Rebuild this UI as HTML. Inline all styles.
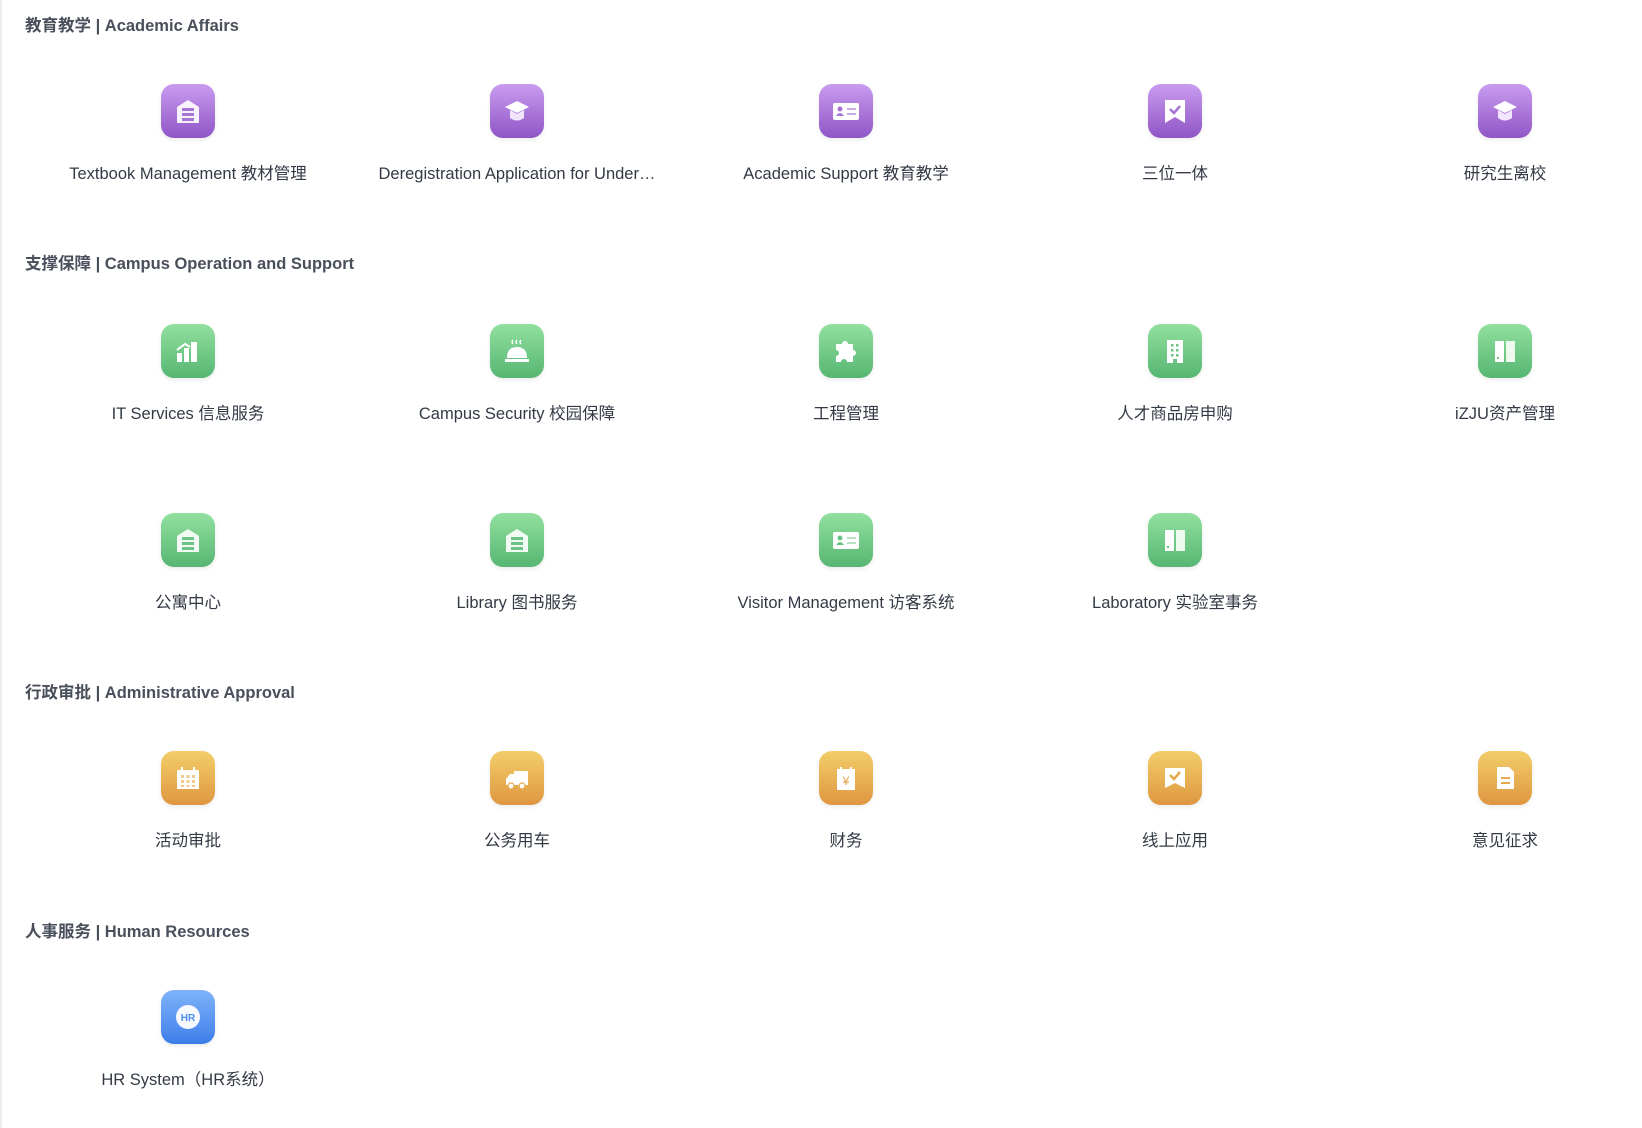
<!DOCTYPE html>
<html><head><meta charset="utf-8"><style>
*{margin:0;padding:0;box-sizing:border-box}
html,body{width:1642px;height:1128px;background:#fff;overflow:hidden;position:relative;font-family:"Liberation Sans","Noto Sans CJK SC",sans-serif}
.h{position:absolute;left:25px;font-size:16.5px;font-weight:bold;color:#4a4f5c;line-height:20px}
.it{position:absolute;width:320px;text-align:center}
.ic{width:54px;height:54px;border-radius:13px;margin:0 auto;display:flex;align-items:center;justify-content:center;box-shadow:0 2px 4px rgba(0,0,0,.08)}
.p{background:linear-gradient(#c99cf0,#8f55c6)}
.g{background:linear-gradient(#92e09f,#56b672)}
.o{background:linear-gradient(#f2ce6a,#df9640)}
.b{background:linear-gradient(#7fb4fa,#3d7ee9)}
.l{margin-top:26px;font-size:16.5px;color:#333a45;line-height:20px;white-space:nowrap}
.edge{position:absolute;left:0;top:0;width:2px;height:1128px;background:#eee}
</style></head><body>
<div class="edge"></div>
<div class="h" style="top:16px">教育教学 | Academic Affairs</div>
<div class="h" style="top:254px">支撑保障 | Campus Operation and Support</div>
<div class="h" style="top:683px">行政审批 | Administrative Approval</div>
<div class="h" style="top:922px">人事服务 | Human Resources</div>

<!-- row 1 -->
<div class="it" style="left:28px;top:84px"><div class="ic p"><svg width="30" height="30" viewBox="0 0 30 30"><path d="M4 11L15 4L26 11V27H4Z" fill="#fff" opacity=".9"/><rect x="9" y="12" width="12" height="3" fill="#a673d6"/><rect x="9" y="17" width="12" height="3" fill="#a673d6"/><rect x="9" y="22" width="12" height="3" fill="#a673d6"/></svg></div><div class="l">Textbook Management 教材管理</div></div>
<div class="it" style="left:357px;top:84px"><div class="ic p"><svg width="30" height="30" viewBox="0 0 30 30"><path d="M3 11L15 5L27 11L15 17Z" fill="#fff"/><path d="M8 14V22Q15 27 22 22V14L15 18Z" fill="#f1e6fb"/></svg></div><div class="l">Deregistration Application for Under…</div></div>
<div class="it" style="left:686px;top:84px"><div class="ic p"><svg width="32" height="30" viewBox="0 0 32 30"><rect x="3" y="7" width="26" height="17" rx="2" fill="#fff"/><circle cx="10" cy="13" r="2.5" fill="#a673d6"/><path d="M6 20Q10 14 14 20Z" fill="#a673d6"/><rect x="17" y="12" width="9" height="2" fill="#c9a9e8"/><rect x="17" y="17" width="9" height="2" fill="#c9a9e8"/></svg></div><div class="l">Academic Support 教育教学</div></div>
<div class="it" style="left:1015px;top:84px"><div class="ic p"><svg width="30" height="30" viewBox="0 0 30 30"><path d="M5 4H25V27L15 21L5 27Z" fill="#fff"/><path d="M10 13L14 17L20 10" stroke="#a673d6" stroke-width="2.5" fill="none"/></svg></div><div class="l">三位一体</div></div>
<div class="it" style="left:1345px;top:84px"><div class="ic p"><svg width="30" height="30" viewBox="0 0 30 30"><path d="M3 11L15 5L27 11L15 17Z" fill="#fff"/><path d="M8 14V22Q15 27 22 22V14L15 18Z" fill="#f1e6fb"/></svg></div><div class="l">研究生离校</div></div>

<!-- row 2 -->
<div class="it" style="left:28px;top:324px"><div class="ic g"><svg width="30" height="30" viewBox="0 0 30 30"><rect x="4" y="17" width="5" height="9" fill="#fff"/><rect x="11" y="12" width="5" height="14" fill="#fff"/><rect x="18" y="6" width="6" height="20" fill="#fff"/><path d="M4 14L12 8L17 11" stroke="#fff" stroke-width="2" fill="none"/></svg></div><div class="l">IT Services 信息服务</div></div>
<div class="it" style="left:357px;top:324px"><div class="ic g"><svg width="30" height="30" viewBox="0 0 30 30"><path d="M5 22Q5 11 15 11Q25 11 25 22Z" fill="#fff"/><rect x="3" y="23" width="24" height="3" fill="#fff"/><path d="M11 4Q9 6 11 8M15 4Q13 6 15 8M19 4Q17 6 19 8" stroke="#fff" stroke-width="1.4" fill="none"/></svg></div><div class="l">Campus Security 校园保障</div></div>
<div class="it" style="left:686px;top:324px"><div class="ic g"><svg width="30" height="30" viewBox="0 0 30 30"><path d="M5 8H11A3 3 0 0 1 17 8H22V14A3 3 0 0 1 22 20V26H16A3 3 0 0 0 10 26H5V20A3 3 0 0 0 5 14Z" fill="#fff"/></svg></div><div class="l">工程管理</div></div>
<div class="it" style="left:1015px;top:324px"><div class="ic g"><svg width="30" height="30" viewBox="0 0 30 30"><rect x="7" y="4" width="16" height="23" fill="#fff"/><g fill="#6cc484"><rect x="11" y="8" width="2.5" height="2.5"/><rect x="16" y="8" width="2.5" height="2.5"/><rect x="11" y="13" width="2.5" height="2.5"/><rect x="16" y="13" width="2.5" height="2.5"/><rect x="11" y="18" width="2.5" height="2.5"/><rect x="16" y="18" width="2.5" height="2.5"/><rect x="13" y="23" width="4" height="4"/></g></svg></div><div class="l">人才商品房申购</div></div>
<div class="it" style="left:1345px;top:324px"><div class="ic g"><svg width="30" height="30" viewBox="0 0 30 30"><rect x="5" y="5" width="9" height="21" fill="#fff"/><rect x="16" y="5" width="9" height="21" fill="#eef9f0"/><rect x="7" y="21" width="2" height="2" fill="#6cc484"/></svg></div><div class="l">iZJU资产管理</div></div>

<!-- row 3 -->
<div class="it" style="left:28px;top:513px"><div class="ic g"><svg width="30" height="30" viewBox="0 0 30 30"><path d="M4 11L15 4L26 11V27H4Z" fill="#fff" opacity=".9"/><rect x="9" y="12" width="12" height="3" fill="#6cc484"/><rect x="9" y="17" width="12" height="3" fill="#6cc484"/><rect x="9" y="22" width="12" height="3" fill="#6cc484"/></svg></div><div class="l">公寓中心</div></div>
<div class="it" style="left:357px;top:513px"><div class="ic g"><svg width="30" height="30" viewBox="0 0 30 30"><path d="M4 11L15 4L26 11V27H4Z" fill="#fff" opacity=".9"/><rect x="9" y="12" width="12" height="3" fill="#6cc484"/><rect x="9" y="17" width="12" height="3" fill="#6cc484"/><rect x="9" y="22" width="12" height="3" fill="#6cc484"/></svg></div><div class="l">Library 图书服务</div></div>
<div class="it" style="left:686px;top:513px"><div class="ic g"><svg width="32" height="30" viewBox="0 0 32 30"><rect x="3" y="7" width="26" height="17" rx="2" fill="#fff"/><circle cx="10" cy="13" r="2.5" fill="#6cc484"/><path d="M6 20Q10 14 14 20Z" fill="#6cc484"/><rect x="17" y="12" width="9" height="2" fill="#b5e3c1"/><rect x="17" y="17" width="9" height="2" fill="#b5e3c1"/></svg></div><div class="l">Visitor Management 访客系统</div></div>
<div class="it" style="left:1015px;top:513px"><div class="ic g"><svg width="30" height="30" viewBox="0 0 30 30"><rect x="5" y="5" width="9" height="21" fill="#fff"/><rect x="16" y="5" width="9" height="21" fill="#eef9f0"/><rect x="7" y="21" width="2" height="2" fill="#6cc484"/></svg></div><div class="l">Laboratory 实验室事务</div></div>

<!-- approval -->
<div class="it" style="left:28px;top:751px"><div class="ic o"><svg width="30" height="30" viewBox="0 0 30 30"><rect x="4" y="7" width="22" height="19" fill="#fff"/><rect x="8" y="4" width="2" height="5" fill="#fff"/><rect x="20" y="4" width="2" height="5" fill="#fff"/><g fill="#f0c98a"><rect x="8" y="12" width="3" height="3"/><rect x="13.5" y="12" width="3" height="3"/><rect x="19" y="12" width="3" height="3"/><rect x="8" y="17" width="3" height="3"/><rect x="13.5" y="17" width="3" height="3"/><rect x="19" y="17" width="3" height="3"/><rect x="8" y="22" width="3" height="2"/><rect x="13.5" y="22" width="3" height="2"/><rect x="19" y="22" width="3" height="2"/></g></svg></div><div class="l">活动审批</div></div>
<div class="it" style="left:357px;top:751px"><div class="ic o"><svg width="30" height="30" viewBox="0 0 30 30"><path d="M12 8H26V22H4V16L8 11H12Z" fill="#fff"/><circle cx="9" cy="23" r="3" fill="#fff" stroke="#e6a84c" stroke-width="1.2"/><circle cx="20" cy="23" r="3" fill="#fff" stroke="#e6a84c" stroke-width="1.2"/></svg></div><div class="l">公务用车</div></div>
<div class="it" style="left:686px;top:751px"><div class="ic o"><svg width="30" height="30" viewBox="0 0 30 30"><rect x="6" y="6" width="18" height="21" fill="#fff"/><rect x="9" y="4" width="2" height="4" fill="#fff"/><rect x="19" y="4" width="2" height="4" fill="#fff"/><text x="15" y="22" font-size="12" text-anchor="middle" fill="#e0a24a" font-family="Liberation Sans">¥</text></svg></div><div class="l">财务</div></div>
<div class="it" style="left:1015px;top:751px"><div class="ic o"><svg width="30" height="30" viewBox="0 0 30 30"><path d="M5 5H25V25L15 20L5 25Z" fill="#fff"/><path d="M10 12L14 16L20 9" stroke="#e6a84c" stroke-width="2.5" fill="none"/></svg></div><div class="l">线上应用</div></div>
<div class="it" style="left:1345px;top:751px"><div class="ic o"><svg width="30" height="30" viewBox="0 0 30 30"><path d="M7 4H19L24 9V26H7Z" fill="#fff"/><rect x="11" y="14" width="9" height="2" fill="#e6a84c"/><rect x="11" y="19" width="9" height="2" fill="#e6a84c"/></svg></div><div class="l">意见征求</div></div>

<!-- HR -->
<div class="it" style="left:28px;top:990px"><div class="ic b"><svg width="32" height="32" viewBox="0 0 32 32"><circle cx="16" cy="16" r="12" fill="#fff" opacity=".95"/><text x="16" y="20" font-size="10" font-weight="bold" text-anchor="middle" fill="#4d8cf0" font-family="Liberation Sans">HR</text></svg></div><div class="l">HR System（HR系统）</div></div>
</body></html>
